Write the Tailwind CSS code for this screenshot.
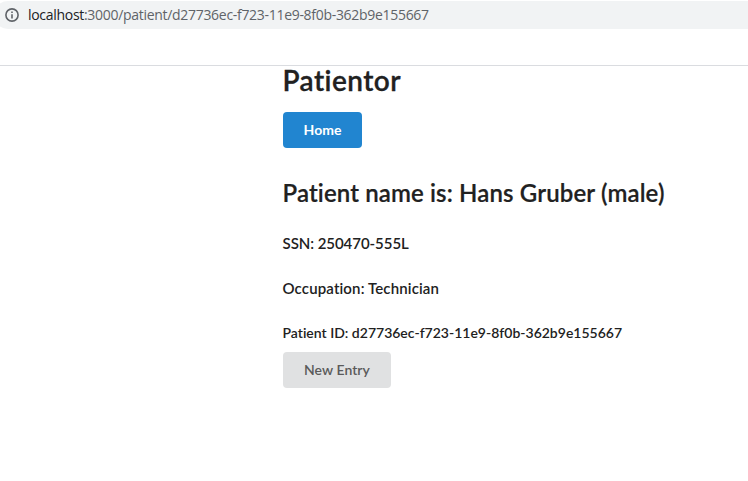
<!DOCTYPE html>
<html lang="en"><head><meta charset="utf-8"><title>Patientor</title>
<script src="https://cdn.jsdelivr.net/npm/@tailwindcss/browser@4"></script></head>
<body class="bg-white w-[748px] h-[481px] overflow-hidden text-[#212121] font-['Lato',sans-serif] [font-variant-ligatures:none]">
<header class="h-[66px] border-b border-[#dadce0] pt-px">
<div class="h-[28px] -ml-[6px] rounded-l-[14px] bg-[#f1f3f4] flex items-center pl-[11px]">
<svg class="w-[14px] h-[14px] shrink-0" viewBox="0 0 14 14" fill="none" stroke="#5f6368" stroke-width="1.6"><circle cx="7" cy="7" r="6.1"/><path d="M7 6.2v4.3M7 3.5v1.6"/></svg>
<span class="ml-[9px] text-[14px] leading-[20px] tracking-[-0.3px] whitespace-nowrap text-[#5f6368] font-['Open_Sans',sans-serif]"><span class="text-[#202124]">localhost</span>:3000/patient/d27736ec-f723-11e9-8f0b-362b9e155667</span>
</div></header>
<main class="pl-[283px] flex flex-col items-start whitespace-nowrap">
<h1 class="text-[28px] leading-[36px] font-semibold tracking-[0.45px] mt-[-4px] -ml-[0.5px] [-webkit-text-stroke:0.3px_#212121]">Patientor</h1>
<button class="mt-[14px] w-[79px] h-[36px] rounded-[4px] bg-[#2185d0] text-white text-[14px] leading-[14px] font-bold">Home</button>
<h2 class="mt-[29px] -ml-[0.5px] text-[24px] leading-[31px] font-semibold tracking-[0.13px] [-webkit-text-stroke:0.2px_#212121]">Patient name is: Hans Gruber (male)</h2>
<h4 class="mt-[26px] -ml-[0.5px] text-[15px] leading-[19px] tracking-[-0.05px] font-semibold">SSN: 250470-555L</h4>
<h4 class="mt-[26px] -ml-[0.5px] text-[15px] leading-[19px] tracking-[0.14px] font-semibold">Occupation: Technician</h4>
<h5 class="mt-[26px] -ml-[0.5px] text-[14px] leading-[18px] font-semibold">Patient ID: d27736ec-f723-11e9-8f0b-362b9e155667</h5>
<button class="mt-[10px] w-[108px] h-[36px] rounded-[4px] bg-[#e0e1e2] text-[#5a5a5a] text-[14px] leading-[14px] tracking-[0.05px] font-semibold">New Entry</button>
</main></body></html>
